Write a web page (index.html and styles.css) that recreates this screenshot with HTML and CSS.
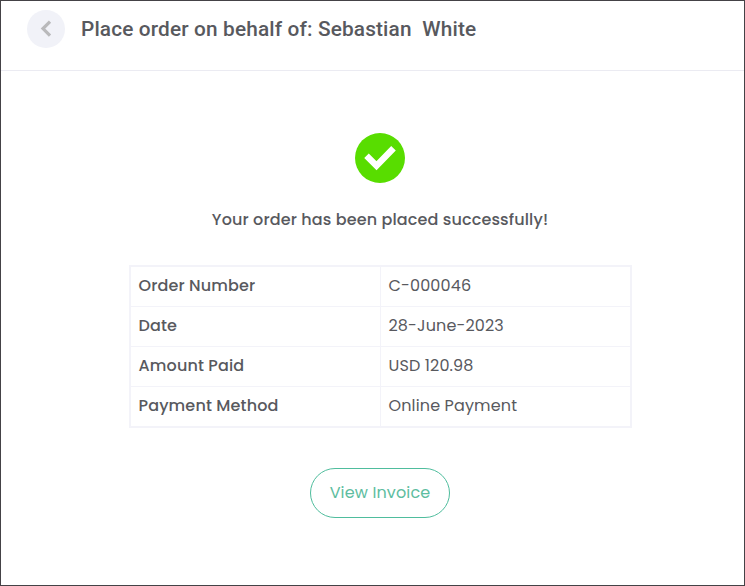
FILE: index.html
```html
<!DOCTYPE html>
<html lang="en">
<head>
    <meta charset="UTF-8">
    <meta name="viewport" content="width=device-width, initial-scale=1.0">
    <title>Place order</title>
    <link rel="stylesheet" href="styles.css">
</head>
<body>
    <div class="page">
        <header class="header">
            <button class="back" aria-label="Back">
                <svg width="38" height="38" viewBox="0 0 38 38">
                    <path d="M23 11.6 L16 18.6 L23 25.6" fill="none" stroke="#b9b9bb" stroke-width="3.2"/>
                </svg>
            </button>
            <h1 class="title">Place order on behalf of: Sebastian&nbsp; White</h1>
        </header>

        <main class="content">
            <svg class="success-icon" width="50" height="50" viewBox="0 0 50 50">
                <circle cx="25" cy="25" r="25" fill="#58dd00"/>
                <path d="M11.5 22.8 L21.5 32.8 L38.5 15.2" fill="none" stroke="#fff" stroke-width="6.4"/>
            </svg>
            <p class="message">Your order has been placed successfully!</p>

            <table class="order">
                <tr>
                    <th>Order Number</th>
                    <td>C-000046</td>
                </tr>
                <tr>
                    <th>Date</th>
                    <td>28-June-2023</td>
                </tr>
                <tr>
                    <th>Amount Paid</th>
                    <td>USD 120.98</td>
                </tr>
                <tr>
                    <th>Payment Method</th>
                    <td>Online Payment</td>
                </tr>
            </table>

            <button class="invoice">View Invoice</button>
        </main>
    </div>
</body>
</html>
```

FILE: styles.css
```css
* {
    margin: 0;
    padding: 0;
    box-sizing: border-box;
}

body {
    font-family: Poppins, Inter, sans-serif;
    font-size: 16px;
    color: #58595e;
    background-color: #fff;
}

.page {
    height: 586px;
    border: 1px solid #444246;
}

/* Header */
.header {
    display: flex;
    align-items: center;
    gap: 16px;
    height: 70px;
    padding: 0 26px 14px;
    border-bottom: 1px solid #ebebf2;
}

.back {
    width: 38px;
    height: 38px;
    border: none;
    border-radius: 50%;
    background-color: #f1f2f8;
    cursor: pointer;
}

.back svg {
    display: block;
}

.title {
    font-family: Roboto, sans-serif;
    font-size: 20.8px;
    font-weight: 500;
    line-height: 24px;
    letter-spacing: 0.15px;
}

/* Order result */
.content {
    display: flex;
    flex-direction: column;
    align-items: center;
    padding: 62px 0 0 15px;
}

.message {
    margin-top: 25px;
    line-height: 24px;
    font-weight: 500;
    letter-spacing: 0.13px;
}

.order {
    width: 503px;
    margin-top: 33px;
    border: 2px solid #f3f3f9;
    border-spacing: 0;
    table-layout: fixed;
}

.order th,
.order td {
    height: 40px;
    padding: 0 7px 2px 8px;
    border-bottom: 1px solid #f3f3f9;
    text-align: left;
    font-weight: 400;
    letter-spacing: 0.14px;
}

.order th {
    width: 250px;
    border-right: 1px solid #f3f3f9;
    font-weight: 500;
}

.order tr:last-child th,
.order tr:last-child td {
    height: 39px;
    border-bottom: none;
}

/* Button */
.invoice {
    width: 140px;
    height: 50px;
    margin-top: 40px;
    padding-bottom: 2px;
    border: 1px solid #4fbd9d;
    border-radius: 25px;
    background-color: #fff;
    color: #5dbda0;
    font-family: inherit;
    font-size: 16px;
    letter-spacing: 0.14px;
    cursor: pointer;
}
```
